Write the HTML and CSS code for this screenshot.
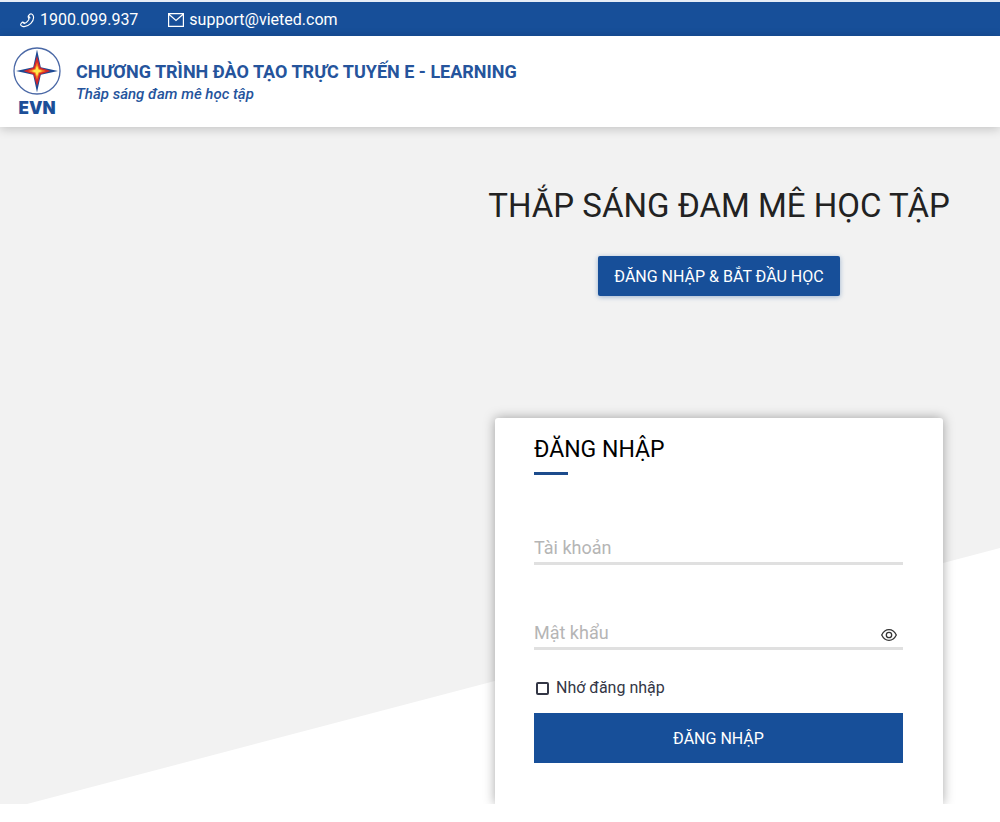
FILE: index.html
```
<!DOCTYPE html>
<html lang="vi">
<head>
    <meta charset="UTF-8">
    <meta name="viewport" content="width=device-width, initial-scale=1.0">
    <title>Chương trình đào tạo trực tuyến E - Learning</title>
    <link rel="stylesheet" href="styles.css">
</head>
<body>
    <div class="top-bar">
        <a href="tel:1900099937" class="contact">
            <svg class="icon-phone" viewBox="0 0 16 16" aria-hidden="true">
                <path d="M10.4 1.3C11.6.5 13.3.9 14 2.7c1 2.500.1 5.800-2.400 8.400-2.600 2.600-6.200 3.800-8.900 3.200-1.800-.4-2.400-1.700-1.700-2.800l1-1.300c.4-.5 1-.6 1.500-.3l1.700 1c1.300-.3 3.900-2.700 4.400-4.300L8.900 4.700c-.3-.6-.2-1.100.1-1.600z"/>
                <path d="M9 3.100l1.900 2.700M2.600 9.800l2.500 1.700"/>
            </svg>
            <span>1900.099.937</span>
        </a>
        <a href="mailto:support@vieted.com" class="contact">
            <svg class="icon-mail" viewBox="0 0 16 14" aria-hidden="true">
                <path d="M.6.6h14.800v12.800H.6zM.6 1l7.400 6.500L15.400 1"/>
            </svg>
            <span>support@vieted.com</span>
        </a>
    </div>

    <header class="header">
        <a href="#" class="logo" aria-label="EVN">
            <svg viewBox="0 0 48 48" aria-hidden="true">
                <circle cx="24" cy="24" r="23" fill="#fff" stroke="#4a68a6" stroke-width="1.300"/>
                <path fill="#1d4a94" d="M24 2.500l3.800 17.700L45 24l-17.200 3.800L24 45.500l-3.800-17.700L3 24l17.200-3.800z"/>
                <path fill="#d3262c" d="M24 9l3.500 11.500L37.500 24l-10 3.500L24 39l-3.500-11.500L10.500 24l10-3.500z"/>
                <path fill="#f47a20" d="M24 15l2.300 6.700L33 24l-6.700 2.300L24 33l-2.300-6.700L15 24l6.700-2.300z"/>
                <path fill="#ffe94a" d="M24 18.500l1.500 4 4 1.500-4 1.500-1.500 4-1.500-4-4-1.500 4-1.500z"/>
            </svg>
            <span class="logo-name">EVN</span>
        </a>
        <div class="brand">
            <p class="brand-title">CHƯƠNG TRÌNH ĐÀO TẠO TRỰC TUYẾN E - LEARNING</p>
            <p class="brand-slogan">Thắp sáng đam mê học tập</p>
        </div>
    </header>

    <main class="main">
        <div class="content">
            <section class="hero">
                <h1>THẮP SÁNG ĐAM MÊ HỌC TẬP</h1>
                <button type="button" class="btn start-btn">ĐĂNG NHẬP &amp; BẮT ĐẦU HỌC</button>
            </section>

            <form class="login-card">
                <h2>ĐĂNG NHẬP</h2>
                <div class="field">
                    <input type="text" id="username" placeholder="Tài khoản" aria-label="Tài khoản">
                </div>
                <div class="field">
                    <input type="password" id="password" placeholder="Mật khẩu" aria-label="Mật khẩu">
                    <button type="button" id="toggle-password" class="toggle-btn" aria-label="Hiện mật khẩu">
                        <svg viewBox="0 0 16 12" aria-hidden="true">
                            <path d="M.7 6C2.400 2.500 5 .7 8 .7S13.600 2.500 15.300 6C13.600 9.500 11 11.300 8 11.300S2.400 9.500.7 6z"/>
                            <circle cx="8" cy="6" r="2.700"/>
                        </svg>
                    </button>
                </div>
                <div class="remember">
                    <input type="checkbox" id="remember">
                    <label for="remember">Nhớ đăng nhập</label>
                </div>
                <button type="submit" class="btn login-btn">ĐĂNG NHẬP</button>
            </form>
        </div>
    </main>

    <script>
        // Show or hide the password
        document.getElementById('toggle-password').addEventListener('click', function() {
            const password = document.getElementById('password');
            password.type = password.type === 'password' ? 'text' : 'password';
        });
    </script>
</body>
</html>
```
FILE: styles.css
```
/* Basic reset */
* {
    margin: 0;
    padding: 0;
    box-sizing: border-box;
}

body {
    font-family: Roboto, "Liberation Sans", sans-serif;
    font-size: 16px;
    background-color: #fff;
    color: #222;
}

svg {
    display: block;
    fill: none;
}

a {
    color: inherit;
    text-decoration: none;
}

/* Contact bar */
.top-bar {
    display: flex;
    align-items: center;
    gap: 30px;
    height: 36px;
    padding: 2px 20px 0;
    border-top: 2px solid #e6edf7;
    background-color: #174f99;
    color: #fff;
}

.contact {
    display: flex;
    align-items: center;
    gap: 5px;
    line-height: 20px;
}

.contact svg {
    stroke: #fff;
    stroke-width: 1.2;
}

.icon-phone {
    width: 15px;
    height: 15px;
}

.icon-mail {
    width: 16px;
    height: 14px;
}

/* Header */
.header {
    position: relative;
    z-index: 1;
    display: flex;
    gap: 15px;
    padding: 11px 13px 10px;
    background-color: #fff;
    box-shadow: 0 2px 10px rgba(0, 0, 0, 0.2);
}

.logo {
    display: flex;
    flex-direction: column;
    align-items: center;
    width: 48px;
}

.logo svg {
    width: 48px;
    height: 48px;
}

.logo-name {
    margin-top: 4px;
    font-family: Inter, sans-serif;
    font-size: 17px;
    font-weight: 900;
    line-height: 18px;
    color: #1d4f98;
}

.brand {
    padding-top: 14px;
    color: #25549c;
}

.brand-title {
    font-size: 18px;
    font-weight: 700;
    line-height: 22px;
}

.brand-slogan {
    font-size: 15px;
    font-style: italic;
    font-weight: 500;
    line-height: 22px;
}

/* Main area with the slanted grey background */
.main {
    position: relative;
    overflow: hidden;
}

.main::before {
    content: "";
    position: absolute;
    inset: 0;
    background-color: #f2f2f2;
    clip-path: polygon(0 0, 100% 0, 100% 62.2%, 2.7% 100%, 0 100%);
}

.content {
    position: relative;
    width: 48%;
    margin-left: auto;
    margin-right: 41px;
}

.hero {
    padding-top: 57px;
    text-align: center;
}

.hero h1 {
    margin-bottom: 28px;
    font-size: 33px;
    font-weight: 400;
    line-height: 44px;
    white-space: nowrap;
}

.btn {
    border: none;
    background-color: #174f99;
    color: #fff;
    font-family: inherit;
    font-size: 16px;
    cursor: pointer;
}

.start-btn {
    height: 40px;
    padding: 0 16px;
    border-radius: 2px;
    box-shadow: 0 1px 5px rgba(23, 79, 153, 0.4);
}

/* Login form */
.login-card {
    margin: 122px 16px 0;
    padding: 17px 40px 41px 39px;
    border-radius: 3px 3px 0 0;
    background-color: #fff;
    box-shadow: 0 0 12px rgba(0, 0, 0, 0.35);
}

.login-card h2 {
    margin-bottom: 45px;
    font-size: 23px;
    font-weight: 400;
    line-height: 30px;
    color: #000;
}

.login-card h2::after {
    content: "";
    display: block;
    width: 34px;
    height: 3px;
    margin-top: 7px;
    background-color: #1c4b8c;
}

.field {
    display: flex;
    align-items: center;
    height: 45px;
    margin-bottom: 40px;
    padding-top: 12px;
    border-bottom: 3px solid #e0e0e0;
}

.field input {
    flex: 1;
    min-width: 0;
    height: 30px;
    border: none;
    outline: none;
    background: none;
    font-family: inherit;
    font-size: 18px;
    color: #222;
}

.field input::placeholder {
    color: #b5b5b5;
}

.toggle-btn {
    padding: 5px 6px 0;
    border: none;
    background: none;
    cursor: pointer;
}

.toggle-btn svg {
    width: 16px;
    height: 12px;
    stroke: #333;
    stroke-width: 1.3;
}

.remember {
    display: flex;
    align-items: center;
    gap: 7px;
    margin: -14px 0 13px;
    padding-left: 2px;
    line-height: 24px;
    color: #333645;
}

.remember input {
    appearance: none;
    width: 13px;
    height: 13px;
    border: 2px solid #333645;
    border-radius: 2px;
}

.remember input:checked {
    background-color: #174f99;
}

.login-btn {
    display: block;
    width: 100%;
    height: 50px;
}
```
